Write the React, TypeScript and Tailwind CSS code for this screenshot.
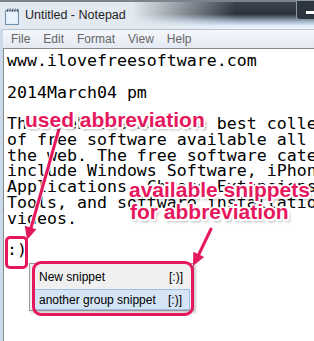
const lines = [
  'www.ilovefreesoftware.com',
  '',
  '2014March04 pm',
  '',
  'This website has the best collection',
  'of free software available all over',
  'the web. The free software categories',
  'include Windows Software, iPhone',
  'Applications, Chrome Extensions, Online',
  'Tools, and software installation',
  'videos.',
  '',
  ':)',
];

const menu = ['File', 'Edit', 'Format', 'View', 'Help'];

const outline =
  '[text-shadow:-2px_0_0_#fff,2px_0_0_#fff,0_-2px_0_#fff,0_2px_0_#fff,-1.5px_-1.5px_0_#fff,1.5px_1.5px_0_#fff,-1.5px_1.5px_0_#fff,1.5px_-1.5px_0_#fff,2px_3px_3px_rgba(0,0,0,0.35)]';

function NotepadIcon() {
  return (
    <svg width="14" height="17" viewBox="0 0 14 17">
      <rect x="0.5" y="2.5" width="13" height="14" fill="#d4e6f6" stroke="#6f8fae" />
      <rect x="1.5" y="3.5" width="11" height="12" fill="#e8f2fb" />
      {[2.5, 5, 7.5, 10, 12.5].map((x) => (
        <path key={x} d={`M${x} 4 V1.2 a0.8 0.8 0 0 1 1.2 0`} fill="none" stroke="#4a5560" strokeWidth="0.9" />
      ))}
    </svg>
  );
}

export default function App() {
  return (
    <div className="relative w-[314px] h-[341px] overflow-hidden bg-[#cbdaea] flex flex-col font-['Liberation_Sans',Arial,sans-serif]">
      {/* title bar */}
      <div className="h-[29px] shrink-0 flex items-center border-t-2 border-[#7b838c] bg-[linear-gradient(to_right,#e3e9f0_0%,#e3e9f0_42%,rgba(227,233,240,0)_75%),linear-gradient(to_bottom,#3c454f,#2a323a_45%,#9fb3c8_72%,#e2edf8_88%,#eef3f9)]">
        <div className="ml-[5px] mt-[1px]">
          <NotepadIcon />
        </div>
        <span className="ml-[6px] text-[12.5px] text-[#1e1e1e]">Untitled - Notepad</span>
        <div className="ml-auto self-start -mt-[2px] w-[18px] h-[20px] border border-r-0 border-[#8c98a4] rounded-bl-[4px] bg-[#2c343d] flex items-center justify-end">
          <div className="w-[8px] h-[3px] bg-white mt-[5px]" />
        </div>
      </div>

      <div className="flex-1 flex flex-col pl-[3px]">
        {/* menu bar */}
        <div className="h-[19px] shrink-0 flex items-center gap-[13px] pl-[8px] border-t border-[#b6c1cf] bg-[linear-gradient(to_bottom,#f5f7fb,#e3e8f1)] text-[12px] text-[#666]">
          {menu.map((m) => (
            <span key={m}>{m}</span>
          ))}
        </div>

        {/* edit area */}
        <div className="flex-1 bg-white border-l border-t border-[#8a8a8a] pl-[3px] pt-[4px] overflow-hidden">
          <div className="font-['DejaVu_Sans_Mono',monospace] text-[16.6px] leading-[15.75px] text-black whitespace-pre">
            {lines.map((l, i) => (
              <div key={i} className="h-[15.75px]">
                {l}
              </div>
            ))}
          </div>
        </div>
      </div>

      {/* snippet popup */}
      <div className="absolute left-[29px] top-[263px] w-[165px] h-[48px] bg-[#f0f0f0] border border-[#979797] shadow-[2px_2px_2px_rgba(0,0,0,0.2)] p-[1px] text-[12px] text-black">
        <div className="h-[24px] flex items-center justify-between pl-[8px] pr-[9px]">
          <span>New snippet</span>
          <span>[:)]</span>
        </div>
        <div className="h-[21px] mx-[2px] flex items-center justify-between pl-[5px] pr-[7px] bg-[#d5e4f5] border border-[#9dbde2]">
          <span>another group snippet</span>
          <span>[:)]</span>
        </div>
      </div>

      {/* annotations */}
      <div className="absolute left-[5px] top-[236px] w-[23px] h-[33px] border-[3px] border-[#e5185d] rounded-[5px]" />
      <div className="absolute left-[32px] top-[261px] w-[162px] h-[55px] border-[3px] border-[#e5185d] rounded-[9px]" />

      <svg className="absolute inset-0 pointer-events-none" width="314" height="341">
        <g stroke="#fff" strokeWidth="5" strokeLinecap="round" opacity="0.8">
          <line x1="59" y1="129" x2="31" y2="228" />
          <line x1="211" y1="229" x2="199" y2="254" />
        </g>
        <g stroke="#e5185d" strokeWidth="3" strokeLinecap="round">
          <line x1="59" y1="129" x2="31" y2="228" />
          <line x1="211" y1="229" x2="199" y2="254" />
        </g>
        <polygon points="27,240 36.4,229.2 24.8,225.8" fill="#e5185d" />
        <polygon points="193,266 204.1,256.9 193.3,251.7" fill="#e5185d" />
      </svg>

      <div className={`absolute left-[25px] top-[109px] text-[21px] leading-[21px] font-bold text-[#e5185d] whitespace-nowrap ${outline}`}>
        used abbreviation
      </div>
      <div className={`absolute left-[129px] top-[179px] text-[21px] leading-[21px] font-bold text-[#e5185d] whitespace-nowrap ${outline}`}>
        available snippets
      </div>
      <div className={`absolute left-[130px] top-[201px] text-[21px] leading-[21px] font-bold text-[#e5185d] whitespace-nowrap ${outline}`}>
        for abbreviation
      </div>
    </div>
  );
}
